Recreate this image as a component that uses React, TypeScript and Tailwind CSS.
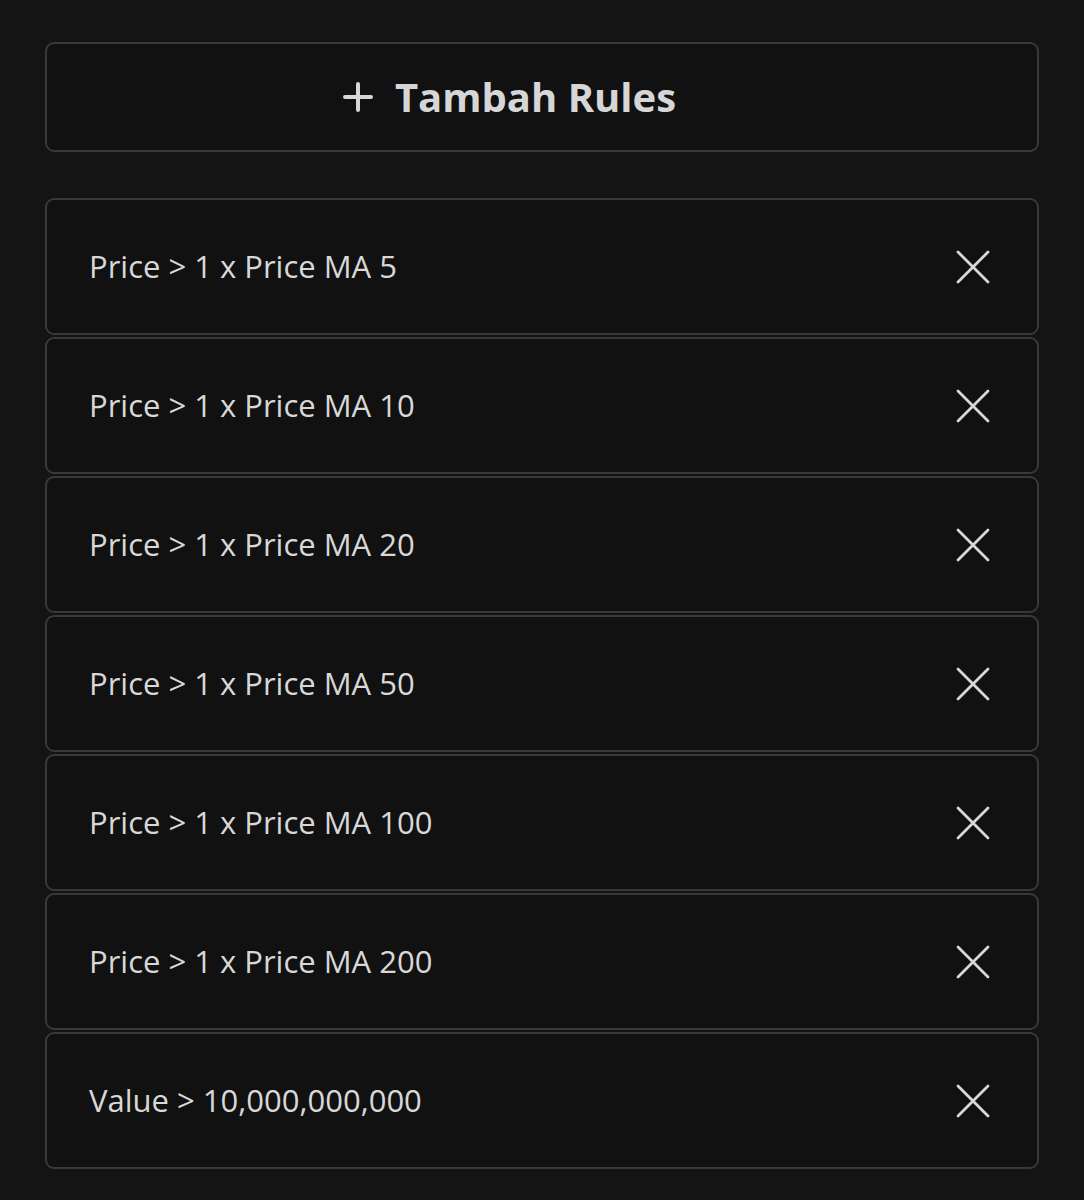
const rules = [
  'Price > 1 x Price MA 5',
  'Price > 1 x Price MA 10',
  'Price > 1 x Price MA 20',
  'Price > 1 x Price MA 50',
  'Price > 1 x Price MA 100',
  'Price > 1 x Price MA 200',
  'Value > 10,000,000,000',
];

function PlusIcon() {
  return (
    <svg width="30" height="30" viewBox="0 0 30 30" fill="none" stroke="currentColor" strokeWidth="4" strokeLinecap="round">
      <path d="M15 2v26M2 15h26" />
    </svg>
  );
}

function CloseIcon() {
  return (
    <svg width="34" height="34" viewBox="0 0 34 34" fill="none" stroke="currentColor" strokeWidth="2.8" strokeLinecap="round">
      <path d="M2 2l30 30M32 2L2 32" />
    </svg>
  );
}

export default function App() {
  return (
    <div
      className="min-h-[1200px] bg-[#141414] px-[45px] pt-[42px]"
      style={{ fontFamily: '"Open Sans", sans-serif' }}
    >
      {/* Tombol tambah */}
      <button className="flex h-[110px] w-full items-center justify-center gap-[22px] rounded-[9px] border-2 border-[#393939] bg-[#111111] pr-[65px] text-[40px] font-bold text-[#d6d6d6]">
        <PlusIcon />
        <span>Tambah Rules</span>
      </button>

      {/* Daftar rules */}
      <div className="mt-[46px] flex flex-col gap-[2px]">
        {rules.map((rule) => (
          <div
            key={rule}
            className="flex h-[137px] items-center justify-between rounded-[9px] border-2 border-[#393939] bg-[#111111] pl-[42px] pr-[47px]"
          >
            <span className="text-[31px] text-[#d8d8d8]">{rule}</span>
            <span className="text-[#d8d8d8]">
              <CloseIcon />
            </span>
          </div>
        ))}
      </div>
    </div>
  );
}
